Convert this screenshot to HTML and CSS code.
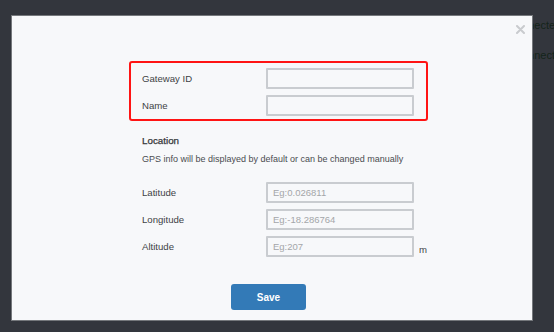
FILE: index.html
```html
<!DOCTYPE html>
<html>
<head>
<meta charset="utf-8">
<link rel="stylesheet" href="styles.css">
</head>
<body>
<div class="page">
  <div class="bg-line bg-line-1">Connected</div>
  <div class="bg-line bg-line-2">Connected</div>
</div>
<div class="modal">
  <button class="close" aria-label="Close">
    <svg width="9" height="9" viewBox="0 0 9 9"><path d="M1 1L8 8M8 1L1 8" stroke="#c9cbce" stroke-width="2" stroke-linecap="round"/></svg>
  </button>
  <div class="highlight">
    <div class="row">
      <label class="label">Gateway ID</label>
      <input class="input" type="text">
    </div>
    <div class="row">
      <label class="label">Name</label>
      <input class="input" type="text">
    </div>
  </div>
  <div class="section">
    <div class="section-title">Location</div>
    <div class="section-desc">GPS info will be displayed by default or can be changed manually</div>
  </div>
  <div class="coords">
    <div class="row">
      <label class="label">Latitude</label>
      <input class="input" type="text" placeholder="Eg:0.026811">
    </div>
    <div class="row">
      <label class="label">Longitude</label>
      <input class="input" type="text" placeholder="Eg:-18.286764">
    </div>
    <div class="row">
      <label class="label">Altitude</label>
      <input class="input" type="text" placeholder="Eg:207">
      <span class="unit">m</span>
    </div>
  </div>
  <button class="save">Save</button>
</div>
</body>
</html>
```
FILE: styles.css
```css
html, body {
  margin: 0;
  padding: 0;
  width: 554px;
  height: 332px;
  overflow: hidden;
  background: #33363d;
  font-family: "Liberation Sans", Arial, sans-serif;
}
.page {
  padding-top: 18px;
}
.bg-line {
  font-size: 11px;
  line-height: 14px;
  color: #14241a;
}
.bg-line-1 {
  padding-left: 508px;
}
.bg-line-2 {
  margin-top: 16px;
  padding-left: 514px;
}
.modal {
  position: absolute;
  left: 11px;
  top: 15px;
  width: 520px;
  height: 304px;
  background: #f7f8fa;
  border: 1px solid #75787c;
  display: flex;
  flex-direction: column;
  align-items: flex-start;
}
.close {
  position: absolute;
  right: 7px;
  top: 9px;
  border: 0;
  background: none;
  padding: 0;
  width: 9px;
  height: 9px;
  display: flex;
}
.highlight {
  margin-top: 45px;
  margin-left: 117px;
  width: 299px;
  height: 60px;
  box-sizing: border-box;
  border: 2px solid #ff1414;
  border-radius: 3px;
  padding: 5px 12px 0 11px;
  display: flex;
  flex-direction: column;
  gap: 6px;
}
.row {
  display: flex;
  align-items: center;
  height: 21px;
}
.label {
  width: 124px;
  font-size: 9.6px;
  color: #404245;
}
.input {
  width: 148px;
  height: 21px;
  box-sizing: border-box;
  border: 2px solid #c9ccd0;
  border-radius: 1px;
  background: #f7f8fa;
  padding: 0 5px;
  font-family: "Liberation Sans", Arial, sans-serif;
  font-size: 9.5px;
  color: #333;
  outline: none;
}
.input::placeholder {
  color: #a4a6a9;
}
.section {
  margin-left: 130px;
  margin-top: 13px;
}
.section-title {
  font-size: 9.8px;
  line-height: 14px;
  color: #333538;
  -webkit-text-stroke: 0.25px #333538;
}
.section-desc {
  margin-top: 4px;
  font-size: 9px;
  line-height: 14px;
  color: #4a4c50;
}
.coords {
  margin-left: 130px;
  margin-top: 16px;
  display: flex;
  flex-direction: column;
  gap: 6px;
}
.unit {
  margin-left: 5px;
  margin-top: 6px;
  font-size: 9.6px;
  color: #404245;
}
.save {
  margin-top: 27px;
  margin-left: 219px;
  width: 75px;
  height: 26px;
  border: 0;
  border-radius: 3px;
  background: #337ab7;
  color: #fff;
  font-family: "Liberation Sans", Arial, sans-serif;
  font-weight: bold;
  font-size: 10px;
}
```
